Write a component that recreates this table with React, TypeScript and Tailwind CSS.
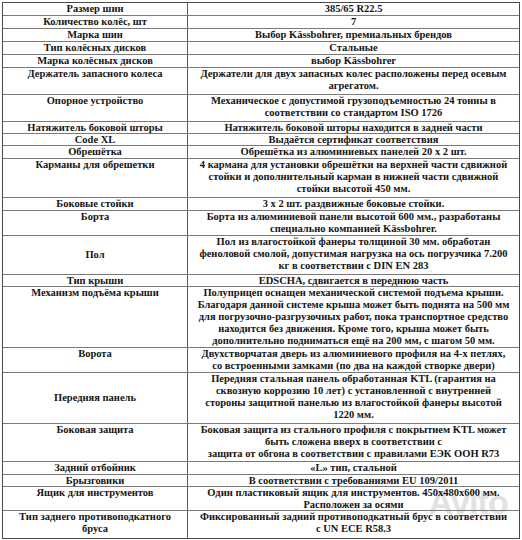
import React from "react";

interface Row {
  label: string[];
  value: string[];
  h: number;
  middle?: boolean;
}

const rows: Row[] = [
  { label: ["Размер шин"], value: ["385/65 R22.5"], h: 13 },
  { label: ["Количество колёс, шт"], value: ["7"], h: 13 },
  { label: ["Марка шин"], value: ["Выбор Kässbohrer, премиальных брендов"], h: 13 },
  { label: ["Тип колёсных дисков"], value: ["Стальные"], h: 13 },
  { label: ["Марка колёсных дисков"], value: ["выбор Kässbohrer"], h: 13 },
  {
    label: ["Держатель запасного колеса"],
    value: ["Держатели для двух запасных колес расположены перед осевым", "агрегатом."],
    h: 27,
  },
  {
    label: ["Опорное устройство"],
    value: ["Механическое с допустимой грузоподъемностью 24 тонны в", "соответствии со стандартом ISO 1726"],
    h: 27,
  },
  { label: ["Натяжитель боковой шторы"], value: ["Натяжитель боковой шторы находится в задней части"], h: 12 },
  { label: ["Code XL"], value: ["Выдаётся сертификат соответствия"], h: 12 },
  { label: ["Обрешётка"], value: ["Обрешётка из алюминиевых панелей 20 х 2 шт."], h: 13 },
  {
    label: ["Карманы для обрешетки"],
    value: [
      "4 кармана для установки обрешётки на верхней части сдвижной",
      "стойки и дополнительный карман в нижней части сдвижной",
      "стойки высотой 450 мм.",
    ],
    h: 39,
  },
  { label: ["Боковые стойки"], value: ["3 х 2 шт. раздвижные боковые стойки."], h: 13 },
  {
    label: ["Борта"],
    value: ["Борта из алюминиевой панели высотой 600 мм., разработаны", "специально компанией Kässbohrer."],
    h: 25,
  },
  {
    label: ["Пол"],
    value: [
      "Пол из влагостойкой фанеры толщиной 30 мм. обработан",
      "феноловой смолой, допустимая нагрузка на ось погрузчика 7.200",
      "кг в соответствии с DIN EN 283",
    ],
    h: 39,
    middle: true,
  },
  { label: ["Тип крыши"], value: ["EDSCHA, сдвигается в переднюю часть"], h: 12 },
  {
    label: ["Механизм подъёма крыши"],
    value: [
      "Полуприцеп оснащен механической системой подъема крыши.",
      "Благодаря данной системе крыша может быть поднята на 500 мм",
      "для погрузочно-разгрузочных работ, пока транспортное средство",
      "находится без движения. Кроме того, крыша может быть",
      "дополнительно подниматься ещё на 200 мм, с шагом 50 мм.",
    ],
    h: 61,
  },
  {
    label: ["Ворота"],
    value: [
      "Двухстворчатая дверь из алюминиевого профиля на 4-х петлях,",
      "со встроенными замками (по два на каждой створке двери)",
    ],
    h: 25,
  },
  {
    label: ["Передняя панель"],
    value: [
      "Передняя стальная панель обработанная KTL (гарантия на",
      "сквозную коррозию 10 лет) с установленной с внутренней",
      "стороны защитной панелью из влагостойкой фанеры высотой",
      "1220 мм.",
    ],
    h: 51,
    middle: true,
  },
  {
    label: ["Боковая защита"],
    value: [
      "Боковая защита из стального профиля с покрытием KTL может",
      "быть сложена вверх в соответствии с",
      "защита от обгона в соответствии с правилами ЕЭК ООН R73",
    ],
    h: 38,
  },
  { label: ["Задний отбойник"], value: ["«L» тип, стальной"], h: 13 },
  { label: ["Брызговики"], value: ["В соответствии с требованиями EU 109/2011"], h: 12 },
  {
    label: ["Ящик для инструментов"],
    value: ["Один пластиковый ящик для инструментов. 450х480х600 мм.", "Расположен за осями"],
    h: 24,
  },
  {
    label: ["Тип заднего противоподкатного", "бруса"],
    value: ["Фиксированный задний противоподкатный брус в соответствии", "с UN ECE R58.3"],
    h: 27,
  },
];

export default function App() {
  return (
    <div className="relative w-[522px] h-[540px] overflow-hidden bg-white pt-[2px] pl-[2px]">
      {/* faint watermark sits under the table text */}
      <div
        className="absolute right-[14px] bottom-[12px] text-[34px] font-bold text-[#e2e2e2] tracking-tight select-none"
        style={{ fontFamily: '"Liberation Sans", Arial, sans-serif' }}
      >
        Avito
      </div>
      <div
        className="relative w-[518px] border border-[#4a4a4a] text-[#151515] font-bold text-[10.5px] leading-[12px] text-center"
        style={{ fontFamily: '"Liberation Serif", "Times New Roman", serif' }}
      >
        {rows.map((r, i) => (
          <div
            key={i}
            className="flex border-b border-[#7a7a7a] last:border-b-0"
            style={{ height: r.h }}
          >
            <div
              className={`w-[185px] shrink-0 border-r border-[#5a5a5a] flex flex-col whitespace-nowrap ${
                r.middle ? "justify-center" : "justify-start"
              }`}
            >
              {r.label.map((l, j) => (
                <div key={j}>{l}</div>
              ))}
            </div>
            <div className="flex-1 flex flex-col whitespace-nowrap">
              {r.value.map((v, j) => (
                <div key={j}>{v}</div>
              ))}
            </div>
          </div>
        ))}
      </div>
    </div>
  );
}
